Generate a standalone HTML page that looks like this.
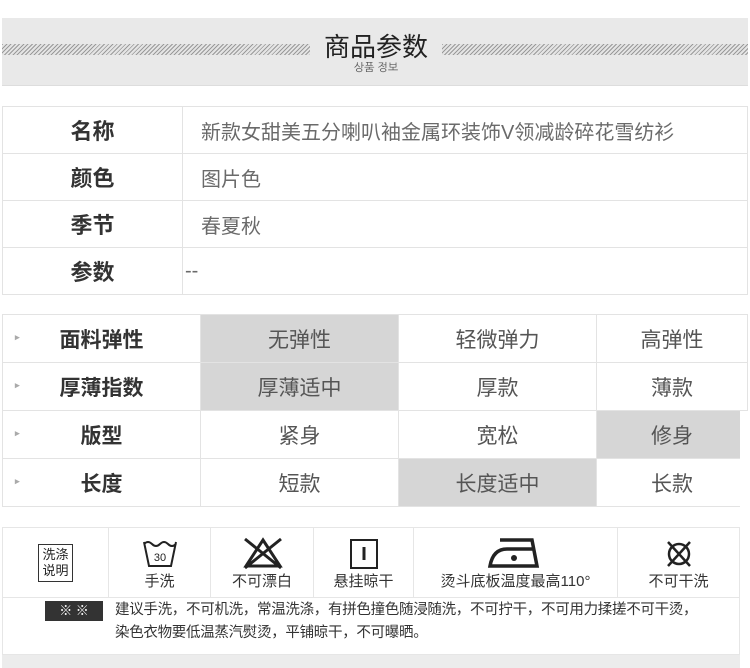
<!DOCTYPE html>
<html><head><meta charset="utf-8"><style>
*{margin:0;padding:0;box-sizing:border-box}
body{width:750px;height:668px;background:#fff;position:relative;overflow:hidden;font-family:"Liberation Sans","Noto Sans CJK SC",sans-serif}
.abs{position:absolute}
.band{left:2px;top:18px;width:746px;height:68px;background:#e9e9e9;border-bottom:1px solid #ddd}
.hatch{top:44px;height:11px;background:repeating-linear-gradient(135deg,#9a9a9a 0 1px,#e4e4e4 1px 3px)}
table{border-collapse:collapse;table-layout:fixed}
td{border:1px solid #e3e3e3;color:#555}
.t1{left:2px;top:106px;width:746px}
.t1 td{height:47px}
.t1 .k{width:180px;text-align:center;font-weight:bold;font-size:22px;color:#333}
.t1 .v{padding-left:18px;font-size:20px;color:#6a6a6a}
.t2{left:2px;top:314px;width:746px}
.t2 td{height:48px;text-align:center;font-size:21px}
.t2 .k{font-weight:bold;color:#333;position:relative}
.t2 .k:before{content:"▸";position:absolute;left:12px;top:17px;font-size:9px;color:#aaa}
.g{background:#d6d6d6}
.wash{left:2px;top:527px;width:738px}
.wash td{height:70px;text-align:center;vertical-align:bottom;padding-bottom:6px;font-size:15px;color:#333;border-color:#e6e6e6}
</style></head><body>
<div class="abs band"></div>
<div class="abs hatch" style="left:2px;width:308px"></div>
<div class="abs hatch" style="left:442px;width:306px"></div>
<div class="abs" style="left:300px;top:27px;width:152px;text-align:center;font-size:26px;color:#222">商品参数</div>
<div class="abs" style="left:310px;top:61px;width:132px;text-align:center;font-size:11px;color:#555;font-family:'Liberation Sans','NanumGothic',sans-serif">상품 정보</div>

<table class="abs t1">
<col style="width:180px"><col>
<tr><td class="k">名称</td><td class="v">新款女甜美五分喇叭袖金属环装饰V领减龄碎花雪纺衫</td></tr>
<tr><td class="k">颜色</td><td class="v">图片色</td></tr>
<tr><td class="k">季节</td><td class="v">春夏秋</td></tr>
<tr><td class="k">参数</td><td class="v" style="padding-left:2px">--</td></tr>
</table>

<table class="abs t2">
<col style="width:198px"><col style="width:198px"><col style="width:198px"><col>
<tr><td class="k">面料弹性</td><td class="g">无弹性</td><td>轻微弹力</td><td>高弹性</td></tr>
<tr><td class="k">厚薄指数</td><td class="g">厚薄适中</td><td>厚款</td><td>薄款</td></tr>
<tr><td class="k">版型</td><td>紧身</td><td>宽松</td><td class="g">修身</td></tr>
<tr><td class="k">长度</td><td>短款</td><td class="g">长度适中</td><td>长款</td></tr>
</table>
<div class="abs" style="left:740px;top:411px;width:10px;height:98px;background:#fff"></div>

<table class="wash abs">
<col style="width:106px"><col style="width:102px"><col style="width:103px"><col style="width:100px"><col style="width:204px"><col>
<tr>
<td style="vertical-align:middle;padding:0"><div style="display:inline-block;border:1px solid #333;font-size:13px;line-height:16px;padding:2px 3px;color:#222">洗涤<br>说明</div></td>
<td style="position:relative"><svg width="40" height="32" viewBox="0 0 40 32" style="position:absolute;left:31px;top:10px"><path d="M4 4 L9 28 H31 L36 4 M4 6 q4 -4 8 0 q4 4 8 0 q4 -4 8 0 q4 4 8 0" fill="none" stroke="#222" stroke-width="2"/><text x="20" y="23" font-size="11" text-anchor="middle" fill="#222" font-family="Liberation Sans">30</text></svg>手洗</td>
<td style="position:relative"><svg width="46" height="34" viewBox="0 0 46 34" style="position:absolute;left:29px;top:8px"><path d="M23 4 L40 30 H6 Z M5 3 L41 32 M41 3 L5 32" fill="none" stroke="#222" stroke-width="3"/></svg>不可漂白</td>
<td style="position:relative"><svg width="30" height="32" viewBox="0 0 30 32" style="position:absolute;left:35px;top:10px"><rect x="2" y="2" width="26" height="28" fill="none" stroke="#222" stroke-width="2"/><path d="M15 9 V22" stroke="#222" stroke-width="3"/></svg>悬挂晾干</td>
<td style="position:relative"><svg width="56" height="34" viewBox="0 0 56 34" style="position:absolute;left:72px;top:8px"><path d="M14 4 H46 L51 30 H4 Q7 13 21 13 H48" fill="none" stroke="#222" stroke-width="3.5"/><circle cx="28" cy="22" r="3" fill="#222"/></svg>烫斗底板温度最高110°</td>
<td style="position:relative"><svg width="30" height="32" viewBox="0 0 30 32" style="position:absolute;left:46px;top:10px"><circle cx="15" cy="16" r="10" fill="none" stroke="#222" stroke-width="2.5"/><path d="M4 4 L26 28 M26 4 L4 28" stroke="#222" stroke-width="2.5"/></svg>不可干洗</td>
</tr>
</table>
<div class="abs" style="left:2px;top:597px;width:738px;height:58px;border:1px solid #e6e6e6;border-top:none"></div>
<div class="abs" style="left:45px;top:601px;width:58px;height:20px;background:#333;color:#fff;font-size:13px;text-align:center;line-height:20px">※ ※</div>
<div class="abs" style="left:115px;top:599px;width:630px;font-size:14.5px;line-height:23px;color:#333;letter-spacing:-0.3px">建议手洗，不可机洗，常温洗涤，有拼色撞色随浸随洗，不可拧干，不可用力揉搓不可干烫，<br>染色衣物要低温蒸汽熨烫，平铺晾干，不可曝晒。</div>
<div class="abs" style="left:2px;top:655px;width:738px;height:13px;background:#ececec"></div>
</body></html>
